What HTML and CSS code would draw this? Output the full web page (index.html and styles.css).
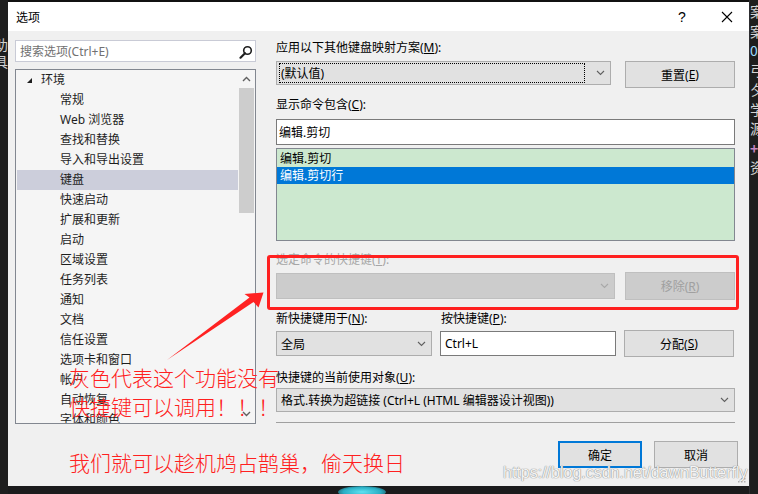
FILE: index.html
```html
<!DOCTYPE html>
<html>
<head>
<meta charset="utf-8">
<title>选项</title>
<link rel="stylesheet" href="styles.css">
</head>
<body>
<div class="screen">
  <div class="strip-left">
    <span class="frag">帮助</span>
    <span class="frag">工具</span>
  </div>
  <div class="center">
    <div class="top-edge"></div>
    <div class="dialog">
      <div class="titlebar">
        <span class="title">选项</span>
        <span class="help">?</span>
        <span class="close">
          <svg width="12" height="12" viewBox="0 0 12 12"><path d="M1 1L11 11M11 1L1 11" stroke="#000" stroke-width="1.1" fill="none"/></svg>
        </span>
      </div>
      <div class="body">
        <div class="left">
          <div class="search">
            <span class="placeholder">搜索选项(Ctrl+E)</span>
            <svg class="search-icon" width="14" height="14" viewBox="0 0 14 14"><circle cx="8.5" cy="5.5" r="3.8" stroke="#1e1e1e" stroke-width="1.6" fill="none"/><path d="M6 8.2L1.5 12.7" stroke="#1e1e1e" stroke-width="2.2" stroke-linecap="round"/></svg>
          </div>
          <div class="tree">
            <div class="tree-list">
              <div class="row root"><span class="twisty"></span>环境</div>
              <div class="row child">常规</div>
              <div class="row child">Web 浏览器</div>
              <div class="row child">查找和替换</div>
              <div class="row child">导入和导出设置</div>
              <div class="row child sel">键盘</div>
              <div class="row child">快速启动</div>
              <div class="row child">扩展和更新</div>
              <div class="row child">启动</div>
              <div class="row child">区域设置</div>
              <div class="row child">任务列表</div>
              <div class="row child">通知</div>
              <div class="row child">文档</div>
              <div class="row child">信任设置</div>
              <div class="row child">选项卡和窗口</div>
              <div class="row child">帐户</div>
              <div class="row child">自动恢复</div>
              <div class="row child">字体和颜色</div>
            </div>
            <div class="scrollbar">
              <div class="sb-btn"><svg width="9" height="6" viewBox="0 0 9 6"><path d="M1 5L4.5 1.5L8 5" stroke="#606060" stroke-width="1.4" fill="none"/></svg></div>
              <div class="sb-thumb"></div>
              <div class="sb-track"></div>
              <div class="sb-btn"><svg width="9" height="6" viewBox="0 0 9 6"><path d="M1 1L4.5 4.5L8 1" stroke="#606060" stroke-width="1.4" fill="none"/></svg></div>
            </div>
          </div>
        </div>
        <div class="right">
          <div class="label l1">应用以下其他键盘映射方案(<u>M</u>):</div>
          <div class="frow r1">
            <div class="combo w335">
              <span class="combo-text focus">(默认值)</span>
              <svg class="chev" width="9" height="6" viewBox="0 0 9 6"><path d="M1 1L4.5 4.5L8 1" stroke="#606060" stroke-width="1.1" fill="none"/></svg>
            </div>
            <div class="btn b27">重置(<u>E</u>)</div>
          </div>
          <div class="label l2">显示命令包含(<u>C</u>):</div>
          <div class="textbox full">编辑.剪切</div>
          <div class="listbox">
            <div class="li">编辑.剪切</div>
            <div class="li picked">编辑.剪切行</div>
          </div>
          <div class="label l3 disabled">选定命令的快捷键(<u>T</u>):</div>
          <div class="frow r2">
            <div class="combo dis w339">
              <span class="combo-text"></span>
              <svg class="chev" width="9" height="6" viewBox="0 0 9 6"><path d="M1 1L4.5 4.5L8 1" stroke="#a8a8a8" stroke-width="1.1" fill="none"/></svg>
            </div>
            <div class="btn dis b28">移除(<u>R</u>)</div>
          </div>
          <div class="label l4">
            <span class="lab-a">新快捷键用于(<u>N</u>):</span>
            <span>按快捷键(<u>P</u>):</span>
          </div>
          <div class="frow r3">
            <div class="combo w156">
              <span class="combo-text">全局</span>
              <svg class="chev" width="9" height="6" viewBox="0 0 9 6"><path d="M1 1L4.5 4.5L8 1" stroke="#606060" stroke-width="1.1" fill="none"/></svg>
            </div>
            <div class="textbox keys">Ctrl+L</div>
            <div class="btn b27">分配(<u>S</u>)</div>
          </div>
          <div class="label l5">快捷键的当前使用对象(<u>U</u>):</div>
          <div class="combo wide">
            <span class="combo-text">格式.转换为超链接 (Ctrl+L (HTML 编辑器设计视图))</span>
            <svg class="chev" width="9" height="6" viewBox="0 0 9 6"><path d="M1 1L4.5 4.5L8 1" stroke="#606060" stroke-width="1.1" fill="none"/></svg>
          </div>
          <div class="separator"></div>
          <div class="footer">
            <div class="btn foot default">确定</div>
            <div class="btn foot">取消</div>
          </div>
        </div>
      </div>
      <svg class="grip" width="8" height="8" viewBox="0 0 8 8"><g fill="#b0b0b0"><rect x="6" y="0" width="1.5" height="1.5"/><rect x="3" y="3" width="1.5" height="1.5"/><rect x="6" y="3" width="1.5" height="1.5"/><rect x="0" y="6" width="1.5" height="1.5"/><rect x="3" y="6" width="1.5" height="1.5"/><rect x="6" y="6" width="1.5" height="1.5"/></g></svg>
    </div>
    <div class="bottom-edge"><span class="blob"></span></div>
  </div>
  <div class="strip-right">
    <span>案</span>
    <span>案</span>
    <span class="blue">01</span>
    <span>弓</span>
    <span>夕</span>
    <span>学</span>
    <span>源</span>
    <span class="purple">+</span>
    <span>资</span>
  </div>

  <div class="red-box"></div>
  <svg class="arrow" width="758" height="494" viewBox="0 0 758 494"><polygon points="167,360 249.5,297.5 244.5,294 263.5,292.5 258.5,307.5 253.5,302" fill="#ff2222"/></svg>
  <div class="note n12">灰色代表这个功能没有<br>快捷键可以调用！！！</div>
  <div class="note n3">我们就可以趁机鸠占鹊巢，偷天换日</div>
  <div class="watermark">https://blog.csdn.net/dawnButterfly</div>
</div>
</body>
</html>
```

FILE: styles.css
```css
* { box-sizing: border-box; }
html, body { margin: 0; padding: 0; }
body {
  background: #1e1e1e;
  font-family: "Noto Sans", "Noto Sans CJK SC", sans-serif;
  font-size: 12px;
  color: #000;
}
u { text-decoration: underline; text-underline-offset: 1px; }

.screen {
  position: relative;
  width: 758px;
  height: 494px;
  display: flex;
  overflow: hidden;
  background: #1e1e1e;
}

/* dark surroundings */
.strip-left {
  width: 8px;
  overflow: hidden;
  display: flex;
  flex-direction: column;
  padding-top: 36px;
  color: #cfcfcf;
  font-size: 14px;
  line-height: 17px;
  font-family: "Noto Sans CJK SC", sans-serif;
}
.strip-left .frag {
  width: 40px;
  margin-left: -32px;
  text-align: right;
  white-space: nowrap;
}
.strip-right {
  width: 9px;
  overflow: hidden;
  display: flex;
  flex-direction: column;
  padding-top: 2px;
  color: #d4d4d4;
  font-size: 14px;
  line-height: 19.5px;
  white-space: nowrap;
  font-family: "Noto Sans CJK SC", sans-serif;
  border-left: 1px solid #2d2d30;
}
.strip-right .blue { color: #9cdcfe; }
.strip-right .purple { color: #c586c0; font-weight: bold; }

.center {
  width: 741px;
  display: flex;
  flex-direction: column;
}
.top-edge { height: 2px; background: #111; }
.bottom-edge {
  height: 8px;
  background: #1b1b1c;
  display: flex;
  padding-left: 330px;
}
.blob {
  width: 48px;
  height: 12px;
  border-radius: 50%;
  background: radial-gradient(ellipse at center, #5fe3f2 0%, #2aaec4 55%, #1b1b1c 100%);
}

/* dialog */
.dialog {
  position: relative;
  height: 484px;
  background: #f0f0f0;
  display: flex;
  flex-direction: column;
}
.titlebar {
  height: 29px;
  background: #fff;
  display: flex;
  align-items: center;
  padding-left: 8px;
}
.title { flex: 1; font-family: "Noto Sans CJK SC", sans-serif; }
.help {
  width: 46px;
  text-align: center;
  font-size: 14px;
  font-family: "Liberation Sans", sans-serif;
}
.close {
  width: 44px;
  display: flex;
  justify-content: center;
  align-items: center;
}

.body {
  flex: 1;
  display: flex;
  gap: 20px;
  padding: 9px 14px 0 7px;
}

/* left column */
.left {
  width: 241px;
  display: flex;
  flex-direction: column;
}
.search {
  height: 22px;
  background: #fff;
  border: 1px solid #c9cbd6;
  display: flex;
  align-items: center;
  padding: 0 2px 0 4px;
}
.placeholder {
  flex: 1;
  color: #717171;
  white-space: nowrap;
}
.search-icon { margin-top: 1px; }

.tree {
  margin-top: 7px;
  height: 355px;
  border: 1px solid #828790;
  background: #f5f5f5;
  display: flex;
  overflow: hidden;
}
.tree-list {
  width: 222px;
  padding-left: 1px;
  overflow: hidden;
}
.row {
  height: 20px;
  line-height: 20px;
  white-space: nowrap;
  color: #1e1e1e;
}
.row.root {
  display: flex;
  align-items: center;
  padding-left: 10px;
}
.twisty {
  width: 0;
  height: 0;
  border-style: solid;
  border-width: 0 0 5px 5px;
  border-color: transparent transparent #1e1e1e transparent;
  margin-right: 9px;
}
.row.child { padding-left: 43px; }
.row.sel { background: #cccedb; }

.scrollbar {
  width: 17px;
  display: flex;
  flex-direction: column;
}
.sb-btn {
  height: 18px;
  display: flex;
  align-items: center;
  justify-content: center;
}
.sb-thumb {
  height: 125px;
  margin: 0 1px;
  background: #cdcdcd;
}
.sb-track { flex: 1; }

/* right column */
.right {
  width: 459px;
  display: flex;
  flex-direction: column;
}
.label {
  height: 16px;
  line-height: 16px;
  white-space: nowrap;
}
.label.disabled { color: #a6a6a6; }
.l2 { margin-top: 9px; }
.l3 { margin-top: 11px; }
.l4 { margin-top: 11px; display: flex; }
.l5 { margin-top: 13px; }
.lab-a { width: 165px; }

.frow {
  display: flex;
  align-items: flex-start;
}
.r1 { margin-top: 5px; gap: 14px; }
.r2 { margin-top: 4px; gap: 10px; }
.r3 { margin-top: 3px; gap: 8px; }

.combo {
  display: flex;
  align-items: center;
  height: 24px;
  background: #e1e1e1;
  border: 1px solid #adadad;
  padding: 0 5px 0 4px;
}
.combo-text {
  flex: 1;
  white-space: nowrap;
  overflow: hidden;
}
.combo-text.focus {
  align-self: stretch;
  margin: 1px 11px 1px -2px;
  padding-left: 1px;
  border: 1px dotted #000;
  display: flex;
  align-items: center;
}
.w335 { width: 335px; }
.w339 { width: 339px; height: 26px; margin-top: 1px; }
.w156 { width: 156px; height: 25px; margin-top: 1px; }
.combo.wide { margin-top: 2px; width: 459px; }
.combo.dis { background: #cccccc; border-color: #bfbfbf; }

.btn {
  width: 110px;
  display: flex;
  align-items: center;
  justify-content: center;
  background: #e1e1e1;
  border: 1px solid #adadad;
  white-space: nowrap;
}
.b27 { height: 27px; }
.b28 { height: 28px; }
.btn.dis { background: #cccccc; border-color: #bfbfbf; color: #a0a0a0; }

.textbox {
  background: #fff;
  border: 1px solid #7a7a7a;
  display: flex;
  align-items: center;
  padding-left: 2px;
  white-space: nowrap;
}
.textbox.full { margin-top: 6px; height: 26px; }
.textbox.keys { width: 176px; height: 25px; margin-top: 1px; padding-left: 4px; }

.listbox {
  margin-top: 3px;
  height: 93px;
  background: #cce8cf;
  border: 1px solid #828790;
  padding-top: 1px;
}
.li {
  height: 17px;
  line-height: 17px;
  padding-left: 3px;
  white-space: nowrap;
}
.li.picked { background: #0078d7; color: #fff; }

.separator {
  margin-top: 10px;
  height: 1px;
  background: #a0a0a0;
}
.footer {
  margin-top: 18px;
  margin-right: -3px;
  display: flex;
  justify-content: flex-end;
  gap: 12px;
}
.btn.foot { width: 84px; height: 27px; }
.btn.default { border: 2px solid #0078d7; }

.grip {
  position: absolute;
  right: 3px;
  bottom: 3px;
}

/* annotations overlay */
.red-box {
  position: absolute;
  left: 267px;
  top: 255px;
  width: 472px;
  height: 55px;
  border: 3px solid #ff2020;
  border-radius: 3px;
}
.arrow {
  position: absolute;
  left: 0;
  top: 0;
  pointer-events: none;
}
.note {
  position: absolute;
  left: 69px;
  color: #ff2020;
  font-family: "Noto Sans CJK SC", sans-serif;
  font-weight: 300;
  font-size: 21px;
  line-height: 29px;
  white-space: nowrap;
}
.n12 { top: 363px; }
.n3 { top: 448px; }
.watermark {
  position: absolute;
  left: 503px;
  top: 463px;
  font-family: "Liberation Sans", sans-serif;
  font-size: 16px;
  line-height: 20px;
  color: #f4f4f4;
  text-shadow: 0 0 1px #8a8a8a, 0 0 1px #8a8a8a;
  white-space: nowrap;
}
```
